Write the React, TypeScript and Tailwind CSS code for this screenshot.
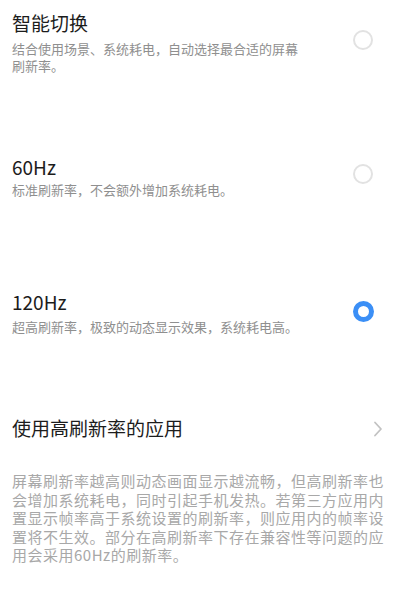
import React from 'react';

const Radio: React.FC<{ checked?: boolean; className?: string }> = ({ checked, className }) =>
  checked ? (
    <div className={`w-[21px] h-[21px] rounded-full border-[5.5px] border-[#3b8ff6] shrink-0 ${className ?? ''}`} />
  ) : (
    <div className={`w-[20px] h-[20px] rounded-full border-2 border-[#e2e2e2] shrink-0 ${className ?? ''}`} />
  );

const App: React.FC = () => {
  return (
    <div
      className="w-[400px] h-[599px] bg-white overflow-hidden text-[#1c1c1c]"
      style={{ fontFamily: '"Noto Sans CJK SC", "Noto Sans", sans-serif' }}
    >
      {/* 智能切换 */}
      <div className="flex items-center justify-between pl-3 pr-[27px] pt-[10px]">
        <div>
          <p className="text-[19px] leading-[26px]">智能切换</p>
          <p className="mt-[5px] text-[13px] leading-[16.5px] text-[#8f8f8f] whitespace-nowrap">
            结合使用场景、系统耗电，自动选择最合适的屏幕
            <br />
            刷新率。
          </p>
        </div>
        <Radio className="mb-[4px]" />
      </div>

      {/* 60Hz */}
      <div className="flex items-center justify-between pl-3 pr-[27px] mt-[80px]">
        <div>
          <p className="text-[19px] leading-[26px]">60Hz</p>
          <p className="mt-[2px] text-[13px] leading-[16.5px] text-[#8f8f8f] whitespace-nowrap">
            标准刷新率，不会额外增加系统耗电。
          </p>
        </div>
        <Radio className="mb-[4px]" />
      </div>

      {/* 120Hz */}
      <div className="flex items-center justify-between pl-3 pr-[26.5px] mt-[90px]">
        <div>
          <p className="text-[19px] leading-[26px]">120Hz</p>
          <p className="mt-[4px] text-[13px] leading-[16.5px] text-[#8f8f8f] whitespace-nowrap">
            超高刷新率，极致的动态显示效果，系统耗电高。
          </p>
        </div>
        <Radio checked />
      </div>

      {/* 使用高刷新率的应用 */}
      <div className="flex items-center justify-between pl-3 pr-[17px] mt-[80px]">
        <p className="text-[19px] leading-[26px]">使用高刷新率的应用</p>
        <svg width="10" height="16" viewBox="0 0 10 16" className="mt-[2px]">
          <polyline points="2,1.5 8,8 2,14.5" fill="none" stroke="#c2c2c2" strokeWidth="1.8" strokeLinecap="round" strokeLinejoin="round" />
        </svg>
      </div>

      {/* 说明 */}
      <p className="mt-[31px] pl-3 text-[15px] tracking-[0.5px] leading-[18.6px] text-[#a8a8a8] whitespace-nowrap">
        屏幕刷新率越高则动态画面显示越流畅，但高刷新率也
        <br />
        会增加系统耗电，同时引起手机发热。若第三方应用内
        <br />
        置显示帧率高于系统设置的刷新率，则应用内的帧率设
        <br />
        置将不生效。部分在高刷新率下存在兼容性等问题的应
        <br />
        用会采用60Hz的刷新率。
      </p>
    </div>
  );
};

export default App;
